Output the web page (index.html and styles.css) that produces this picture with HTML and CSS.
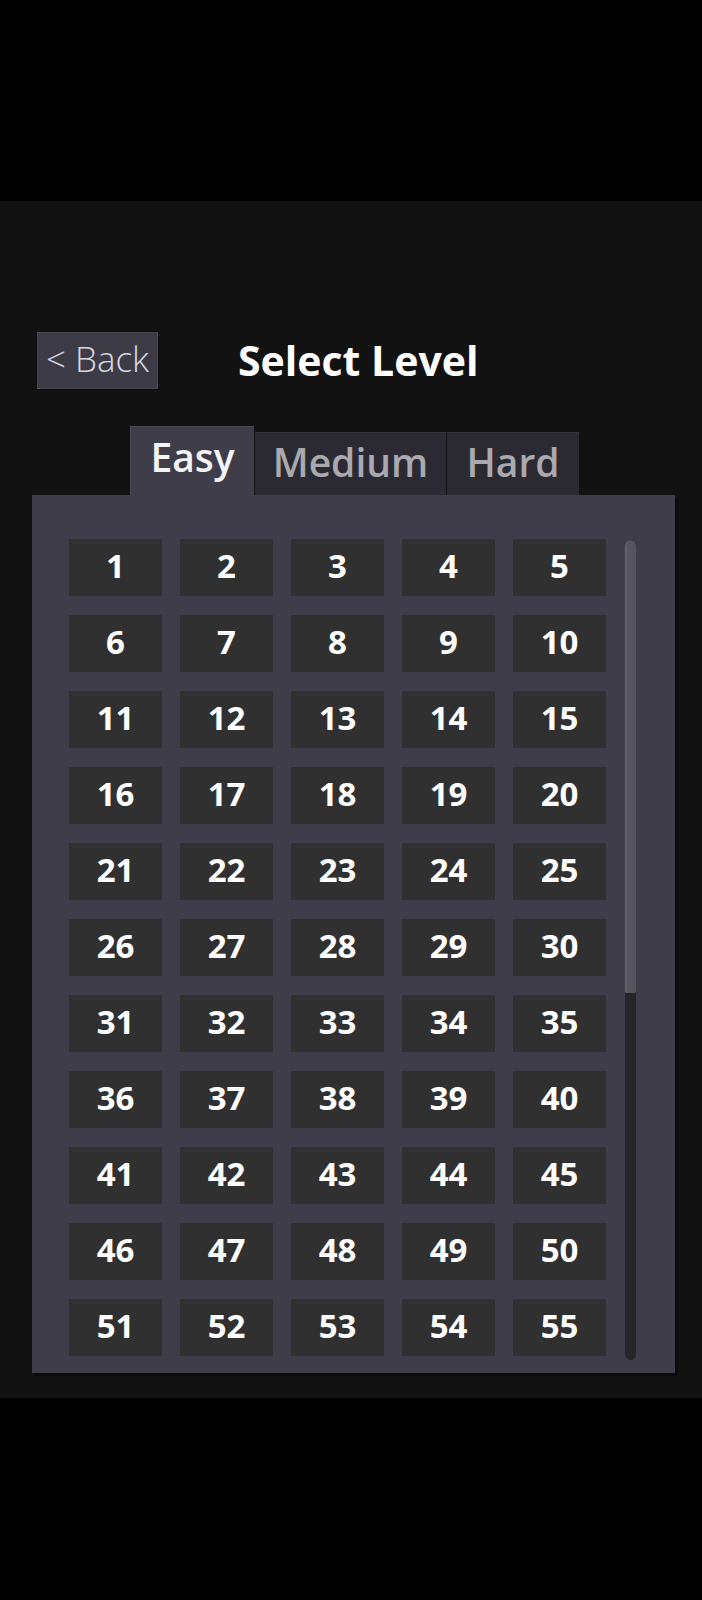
FILE: index.html
```html
<!DOCTYPE html>
<html lang="en">
<head>
<meta charset="utf-8">
<title>Select Level</title>
<link rel="stylesheet" href="styles.css">
</head>
<body>
<div class="top-bar"></div>
<main class="screen">
  <header class="header">
    <button class="back-btn">&lt; Back</button>
    <h1 class="title">Select Level</h1>
  </header>
  <nav class="tabs">
    <div class="tab active">Easy</div>
    <div class="tab">Medium</div>
    <div class="tab">Hard</div>
  </nav>
  <section class="panel">
    <div class="viewport">
      <div class="grid" id="grid"></div>
    </div>
    <div class="scroll-track"><div class="scroll-thumb"></div></div>
  </section>
</main>
<div class="bottom-bar"></div>
<script>
  var g = document.getElementById('grid');
  for (var i = 1; i <= 100; i++) {
    var d = document.createElement('div');
    d.className = 'cell';
    d.textContent = i;
    g.appendChild(d);
  }
</script>
</body>
</html>
```
FILE: styles.css
```css
html, body {
  margin: 0;
  padding: 0;
  background: #000;
  font-family: "Open Sans", "Noto Sans", sans-serif;
}
.top-bar {
  height: 201px;
  background: #000;
}
.screen {
  height: 1197px;
  background: #121212;
  box-sizing: border-box;
  padding-top: 131px;
}
.header {
  display: flex;
  align-items: center;
  padding-left: 37px;
  height: 57px;
}
.back-btn {
  width: 121px;
  height: 57px;
  box-sizing: border-box;
  background: #3c3b46;
  border: 1px solid #4b4a55;
  box-shadow: 0 0 0 1px #0a0a0e;
  color: #d8d8e0;
  font-family: inherit;
  font-size: 35px;
  font-weight: 300;
  padding: 0 0 4px 0;
  margin: 0;
  line-height: 1;
}
.title {
  margin: 0 0 0 80px;
  color: #fff;
  font-size: 41px;
  font-weight: 700;
  line-height: 1;
  padding-bottom: 1px;
}
.tabs {
  display: flex;
  align-items: flex-end;
  padding-left: 130px;
  margin-top: 37px;
  height: 69px;
}
.tab {
  height: 63px;
  box-sizing: border-box;
  background: #2b2a33;
  color: #a9a9af;
  font-size: 39px;
  font-weight: 600;
  display: flex;
  align-items: center;
  justify-content: center;
  margin-right: 1px;
  border-top: 1px solid #35343d;
  padding-bottom: 5px;
}
.tab:nth-child(1) { width: 124px; }
.tab:nth-child(2) { width: 191px; }
.tab:nth-child(3) { width: 132px; }
.tab.active {
  height: 69px;
  background: #3e3d49;
  color: #f4f4f6;
  border-top: 1px solid #4a4955;
  border-left: 1px solid #4a4955;
  padding-bottom: 10px;
}
.panel {
  margin-left: 32px;
  width: 643px;
  height: 878px;
  box-sizing: border-box;
  background: #3e3d49;
  padding: 44px 0 0 37px;
  box-shadow: 3px 3px 0 #0b0b0d;
  display: flex;
  align-items: flex-start;
}
.viewport {
  width: 537px;
  height: 820px;
  overflow-y: scroll;
  scrollbar-width: none;
}
.viewport::-webkit-scrollbar {
  display: none;
}
.grid {
  display: grid;
  grid-template-columns: repeat(5, 93px);
  column-gap: 18px;
  row-gap: 19px;
}
.cell {
  height: 57px;
  background: #303030;
  color: #fff;
  font-size: 33px;
  font-weight: 700;
  display: flex;
  align-items: center;
  justify-content: center;
  padding-bottom: 5px;
  box-sizing: border-box;
}
.scroll-track {
  margin-left: 19px;
  margin-top: 1px;
  width: 11px;
  height: 820px;
  background: #26252c;
  border-radius: 6px;
  overflow: hidden;
}
.scroll-thumb {
  height: 453px;
  background: #56545f;
  border-left: 2px solid #64626d;
  box-sizing: border-box;
  border-radius: 6px 6px 2px 2px;
}
.bottom-bar {
  height: 202px;
  background: #000;
}
```
